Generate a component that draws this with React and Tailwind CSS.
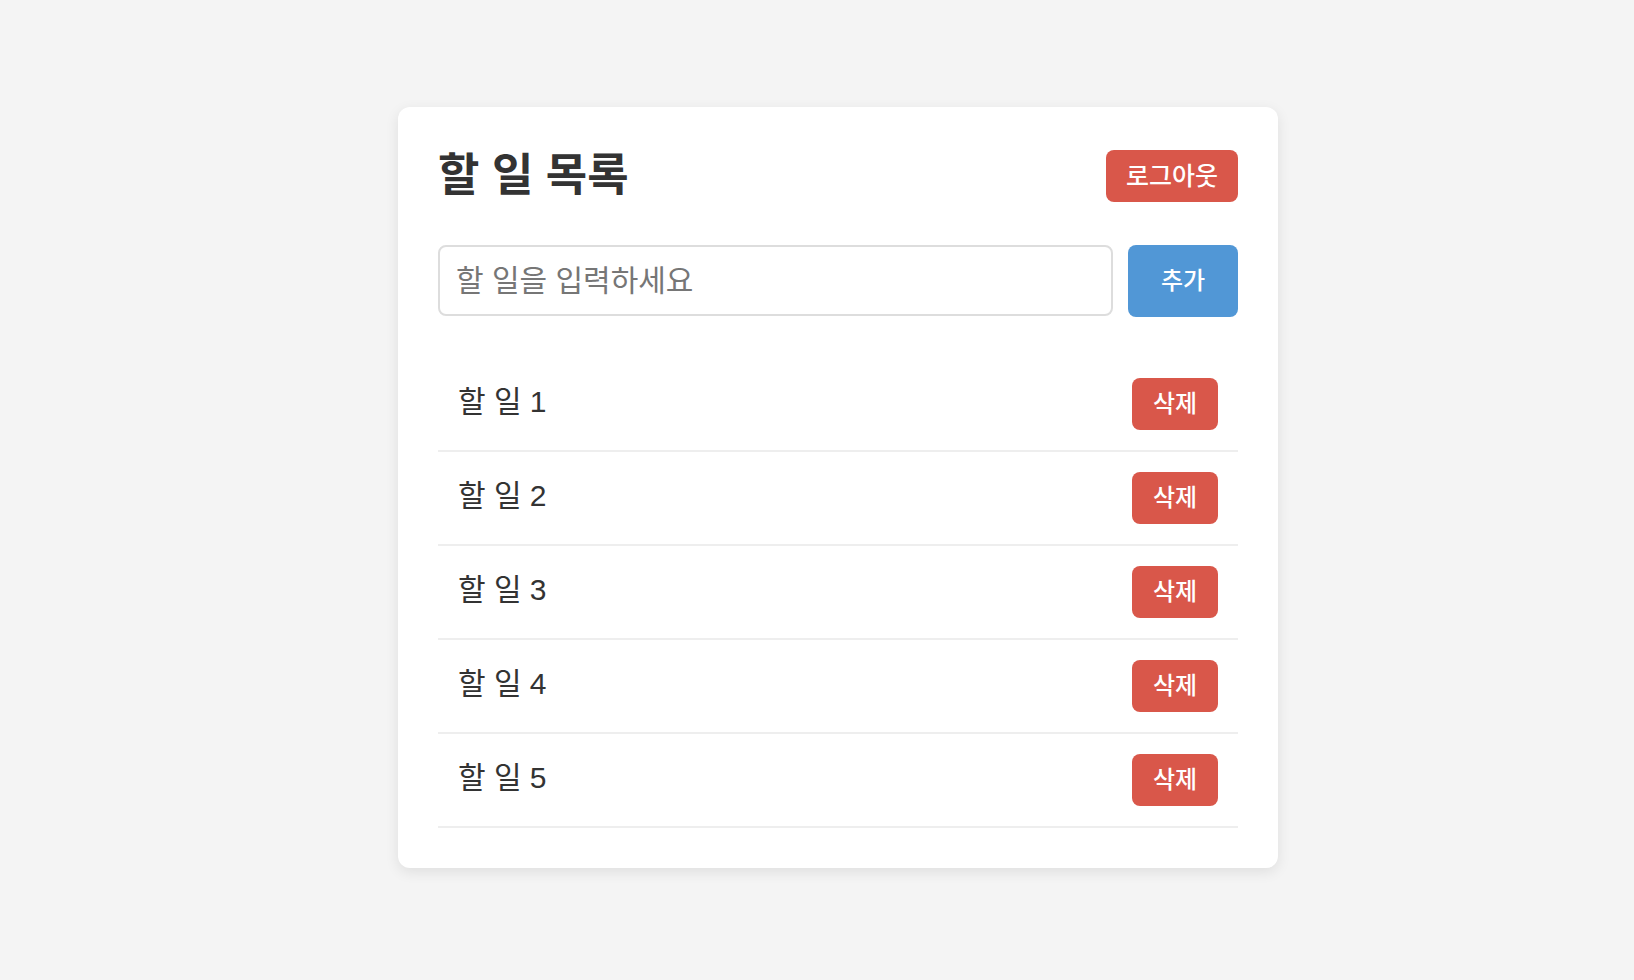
import React, { useState } from 'react';

const FONT = { fontFamily: '"Liberation Sans", "Noto Sans CJK KR", sans-serif' };

export default function App() {
  const [todos, setTodos] = useState(['할 일 1', '할 일 2', '할 일 3', '할 일 4', '할 일 5']);
  const [text, setText] = useState('');

  const addTodo = () => {
    if (!text.trim()) return;
    setTodos([...todos, text.trim()]);
    setText('');
  };

  const removeTodo = (idx) => {
    setTodos(todos.filter((_, i) => i !== idx));
  };

  return (
    <div className="min-h-screen bg-[#f4f4f4] pt-[107px] pl-[398px]" style={FONT}>
      <div className="w-[880px] bg-white rounded-[12px] p-[40px] shadow-[0_4px_14px_rgba(0,0,0,0.09)]">
        {/* Header */}
        <div className="flex items-center justify-between h-[58px]">
          <h1 className="text-[45px] font-bold text-[#333] leading-[58px]">할 일 목록</h1>
          <button className="px-[20px] py-[12px] bg-[#d9574a] text-white text-[25px] font-medium leading-[28px] rounded-[8px]">
            로그아웃
          </button>
        </div>

        {/* Input */}
        <div className="flex gap-[15px] mt-[40px]">
          <input
            value={text}
            onChange={(e) => setText(e.target.value)}
            placeholder="할 일을 입력하세요"
            className="flex-1 h-[71px] border-2 border-[#dddddd] rounded-[8px] px-[16px] text-[30px] text-[#333] placeholder:text-[#767676] outline-none"
          />
          <button
            onClick={addTodo}
            className="w-[110px] h-[72px] bg-[#5197d6] text-white text-[24px] font-medium rounded-[8px]"
          >
            추가
          </button>
        </div>

        {/* List */}
        <ul className="mt-[41px]">
          {todos.map((todo, idx) => (
            <li
              key={idx}
              className="flex items-center justify-between px-[20px] py-[20px] border-b-2 border-[#eeeeee]"
            >
              <span className="text-[30px] text-[#333] -mt-[6px]">{todo}</span>
              <button
                onClick={() => removeTodo(idx)}
                className="w-[86px] h-[52px] bg-[#d9574a] text-white text-[24px] font-medium rounded-[8px]"
              >
                삭제
              </button>
            </li>
          ))}
        </ul>
      </div>
    </div>
  );
}
